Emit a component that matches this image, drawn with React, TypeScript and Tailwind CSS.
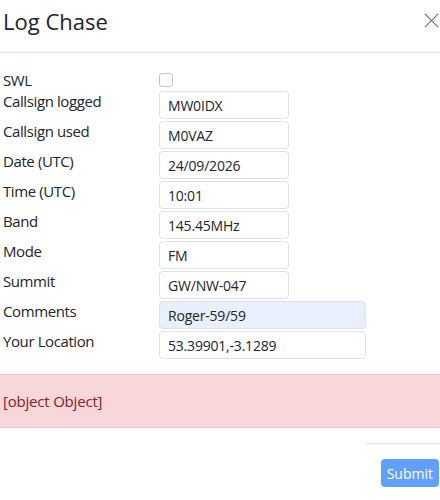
import React from "react";

const font = { fontFamily: '"Open Sans", "Noto Sans", Arial, sans-serif' };

interface FieldProps {
  label: string;
  value: string;
  wide?: boolean;
  filled?: boolean;
}

const Field = ({ label, value, wide, filled }: FieldProps) => (
  <div className="flex h-[30px]">
    <label className="w-[156px] shrink-0 text-[15px] leading-[20px] tracking-[-0.4px] text-[#212529]">{label}</label>
    <input
      readOnly
      value={value}
      className={`h-[28px] ${wide ? "w-[207px]" : "w-[130px]"} rounded border border-[#dee2e6] px-2 text-[14px] tracking-[-0.2px] text-[#212529] outline-none ${
        filled ? "bg-[#e8f0fe]" : "bg-white"
      }`}
    />
  </div>
);

const fields: FieldProps[] = [
  { label: "Callsign logged", value: "MW0IDX" },
  { label: "Callsign used", value: "M0VAZ" },
  { label: "Date (UTC)", value: "24/09/2026" },
  { label: "Time (UTC)", value: "10:01" },
  { label: "Band", value: "145.45MHz" },
  { label: "Mode", value: "FM" },
  { label: "Summit", value: "GW/NW-047" },
  { label: "Comments", value: "Roger-59/59", wide: true, filled: true },
  { label: "Your Location", value: "53.39901,-3.1289", wide: true },
];

export default function App() {
  return (
    <div className="h-[500px] w-[440px] overflow-hidden bg-white text-[#212529]" style={font}>
      {/* header */}
      <div className="flex h-[53px] items-start justify-between border-b border-[#dee2e6] pl-[3px] pr-[1px] pt-[6px]">
        <h5 className="text-[22px] leading-[30px] font-normal">Log Chase</h5>
        <svg width="15" height="15" viewBox="0 0 16 16" className="mt-[7px]">
          <path d="M1 1L15 15M15 1L1 15" stroke="#6c757d" strokeWidth="1.3" />
        </svg>
      </div>

      {/* form */}
      <div className="pl-[3px] pt-[17px]">
        <div className="flex h-[21px]">
          <label className="w-[156px] shrink-0 text-[15px] leading-[20px] tracking-[-0.4px]">SWL</label>
          <div className="mt-[3px] h-[14px] w-[14px] rounded-[3px] border border-[#bfc5cb] bg-white" />
        </div>
        {fields.map((f) => (
          <Field key={f.label} {...f} />
        ))}
      </div>

      {/* error */}
      <div className="mt-[13px] flex h-[54px] items-center border-y border-[#f5c2c7] bg-[#f8d7da] pl-[3px] text-[15px] tracking-[-0.2px] text-[#842029]">
        [object Object]
      </div>

      {/* footer */}
      <div className="mt-[15px] ml-auto w-[74px] border-t border-[#dee2e6]" />
      <div className="flex justify-end pr-[1px] pt-[15px]">
        <button className="h-[28px] rounded bg-[#0d6efd] px-[6px] text-[14px] text-white opacity-65">Submit</button>
      </div>
    </div>
  );
}
